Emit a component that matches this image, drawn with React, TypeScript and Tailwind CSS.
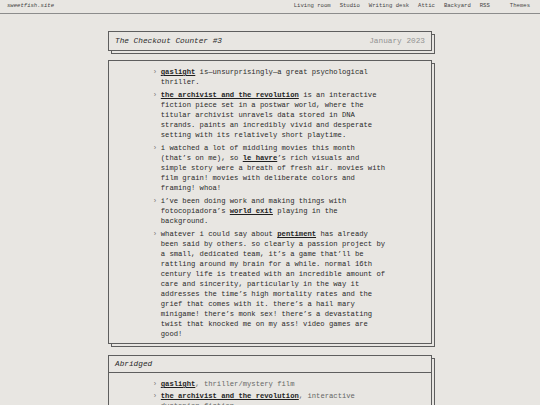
const mono = "font-['Liberation_Mono',_'DejaVu_Sans_Mono',_monospace]";

function B({ children }: { children: React.ReactNode }) {
  return <strong className="font-bold text-[#1f1f1f] underline underline-offset-[1px]">{children}</strong>;
}

function Item({ children }: { children: React.ReactNode }) {
  return (
    <li className="flex">
      <span className="w-[8px] shrink-0 text-[#777]">›</span>
      <p className="w-[52.5ch]">{children}</p>
    </li>
  );
}

const boxShadow = "shadow-[3px_3px_0_-1px_#e8e6e2,3px_3px_0_0_#5e5e5e]";

export default function App() {
  return (
    <div className={`min-h-[405px] bg-[#e8e6e2] text-[#2a2a2a] ${mono}`}>
      <header className="flex h-[14px] items-center justify-between border-b border-[#8c8c8c] pl-[7px] pr-[10px] text-[5.6px] text-[#444]">
        <span className="italic">sweetfish.site</span>
        <nav className="flex items-center">
          <span>Living room</span>
          <span className="ml-[9px]">Studio</span>
          <span className="ml-[9px]">Writing desk</span>
          <span className="ml-[9px]">Attic</span>
          <span className="ml-[9px]">Backyard</span>
          <span className="ml-[9px]">RSS</span>
          <span className="ml-[20px]">Themes</span>
        </nav>
      </header>

      <main className="mx-auto flex w-[324px] flex-col pt-[17px]">
        <div className={`flex items-center justify-between border border-[#5e5e5e] px-[6px] py-[4px] text-[7.75px] leading-[10px] ${boxShadow}`}>
          <span className="italic">The Checkout Counter #3</span>
          <span className="text-[#939393]">January 2023</span>
        </div>

        <section className={`mt-[9px] flex justify-center border border-[#5e5e5e] pt-[6px] pb-[4px] text-[7.2px] leading-[10px] ${boxShadow}`}>
          <ul className="flex flex-col gap-[3px]">
            <Item>
              <B>gaslight</B> is—unsurprisingly—a great psychological thriller.
            </Item>
            <Item>
              <B>the archivist and the revolution</B> is an interactive fiction piece set in a postwar world, where the
              titular archivist unravels data stored in DNA strands. paints an incredibly vivid and desperate setting
              with its relatively short playtime.
            </Item>
            <Item>
              i watched a lot of middling movies this month (that’s on me), so <B>le havre</B>’s rich visuals and simple
              story were a breath of fresh air. movies with film grain! movies with deliberate colors and framing! whoa!
            </Item>
            <Item>
              i’ve been doing work and making things with fotocopiadora’s <B>world exit</B> playing in the background.
            </Item>
            <Item>
              whatever i could say about <B>pentiment</B> has already been said by others. so clearly a passion project
              by a small, dedicated team, it’s a game that’ll be rattling around my brain for a while. normal 16th
              century life is treated with an incredible amount of care and sincerity, particularly in the way it
              addresses the time’s high mortality rates and the grief that comes with it. there’s a hail mary minigame!
              there’s monk sex! there’s a devastating twist that knocked me on my ass! video games are good!
            </Item>
          </ul>
        </section>

        <section className={`mt-[11px] border border-[#5e5e5e] ${boxShadow}`}>
          <div className="border-b border-[#5e5e5e] px-[6px] py-[3px] text-[7.75px] leading-[10px] italic">Abridged</div>
          <div className="flex justify-center pt-[6px] pb-[6px] text-[7.2px] leading-[10px]">
            <ul className="flex flex-col gap-[2px] text-[#666]">
              <Item>
                <B>gaslight</B>, thriller/mystery film
              </Item>
              <Item>
                <B>the archivist and the revolution</B>, interactive dystopian fiction
              </Item>
            </ul>
          </div>
        </section>
      </main>
    </div>
  );
}
